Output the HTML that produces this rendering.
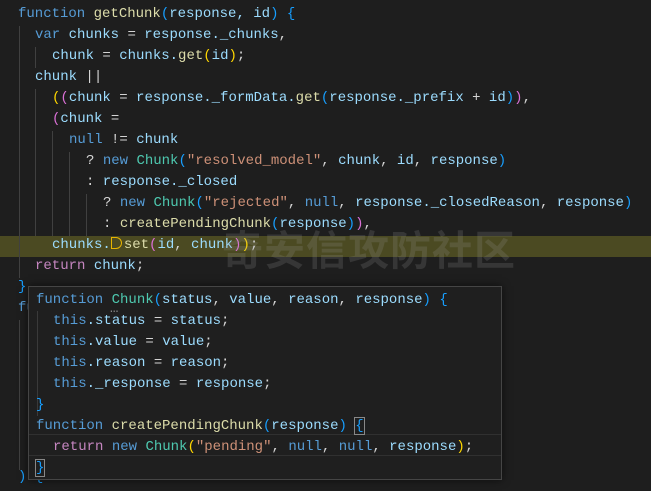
<!DOCTYPE html>
<html><head><meta charset="utf-8"><style>
html,body{margin:0;padding:0;}
body{width:651px;height:489px;background:#1e1e1e;overflow:hidden;position:relative;font-family:"Liberation Mono",monospace;font-size:14px;color:#9cdcfe;}
.l{position:absolute;height:21px;line-height:21px;white-space:pre;}
.k{color:#569cd6}.f{color:#dcdcaa}.c{color:#4ec9b0}.s{color:#ce9178}.p{color:#c586c0}.w{color:#d4d4d4}
.y{color:#ffd700}.m{color:#da70d6}.b{color:#179fff}
.g{position:absolute;width:1px;background:#404040;}
#hl{position:absolute;left:0;top:236px;width:651px;height:21px;background:#4b4a22;}
#wm{position:absolute;left:222px;top:223px;font-family:"Noto Sans CJK SC",sans-serif;font-weight:bold;font-size:41px;line-height:48px;color:rgba(150,150,150,0.2);letter-spacing:1px;white-space:nowrap;}
#pop{position:absolute;left:28px;top:286px;width:472px;height:192px;background:#1f1f1f;border:1px solid #454545;box-shadow:0 0 8px rgba(0,0,0,.6);}
#code{position:absolute;left:0;top:2px;width:651px;height:489px;}
</style></head><body>
<div id="hl"></div>
<div id="code">
<div class="g" style="left:19px;top:24px;height:252px"></div>
<div class="g" style="left:35px;top:45px;height:21px"></div>
<div class="g" style="left:35px;top:87px;height:147px"></div>
<div class="g" style="left:52px;top:129px;height:105px"></div>
<div class="g" style="left:69px;top:150px;height:84px"></div>
<div class="g" style="left:86px;top:192px;height:42px"></div>
<div class="g" style="left:19px;top:318px;height:150px"></div>

<div class="l" style="left:18px;top:2px"><span class="k">function</span> <span class="f">getChunk</span><span class="b">(</span>response, id<span class="b">)</span> <span class="b">{</span></div>
<div class="l" style="left:35px;top:23px"><span class="k">var</span> chunks <span class="w">=</span> response.<span>_chunks</span><span class="w">,</span></div>
<div class="l" style="left:52px;top:44px">chunk <span class="w">=</span> chunks.<span class="f">get</span><span class="y">(</span>id<span class="y">)</span><span class="w">;</span></div>
<div class="l" style="left:35px;top:65px">chunk <span class="w">||</span></div>
<div class="l" style="left:52px;top:86px"><span class="y">(</span><span class="m">(</span>chunk <span class="w">=</span> response._formData.<span class="f">get</span><span class="b">(</span>response._prefix <span class="w">+</span> id<span class="b">)</span><span class="m">)</span><span class="w">,</span></div>
<div class="l" style="left:52px;top:107px"><span class="m">(</span>chunk <span class="w">=</span></div>
<div class="l" style="left:69px;top:128px"><span class="k">null</span> <span class="w">!=</span> chunk</div>
<div class="l" style="left:86px;top:149px"><span class="w">?</span> <span class="k">new</span> <span class="c">Chunk</span><span class="b">(</span><span class="s">"resolved_model"</span><span class="w">,</span> chunk<span class="w">,</span> id<span class="w">,</span> response<span class="b">)</span></div>
<div class="l" style="left:86px;top:170px"><span class="w">:</span> response._closed</div>
<div class="l" style="left:103px;top:191px"><span class="w">?</span> <span class="k">new</span> <span class="c">Chunk</span><span class="b">(</span><span class="s">"rejected"</span><span class="w">,</span> <span class="k">null</span><span class="w">,</span> response._closedReason<span class="w">,</span> response<span class="b">)</span></div>
<div class="l" style="left:103px;top:212px"><span class="w">:</span> <span class="f">createPendingChunk</span><span class="b">(</span>response<span class="b">)</span><span class="m">)</span><span class="w">,</span></div>
<div class="l" style="left:52px;top:233px">chunks.<span style="display:inline-block;width:11px;height:12px;border:1.5px solid #e8b400;border-radius:0 6px 6px 0;box-sizing:border-box;vertical-align:-1px;margin-right:2px"></span><span class="f">set</span><span class="m">(</span>id<span class="w">,</span> chunk<span class="m">)</span><span class="y">)</span><span class="w">;</span></div>
<div class="l" style="left:35px;top:254px"><span class="p">return</span> chunk<span class="w">;</span></div>
<div class="l" style="left:18px;top:275px"><span class="b">}</span></div>
<div class="l" style="left:18px;top:296px"><span class="k">fu</span></div>
<div class="l" style="left:18px;top:465px"><span class="b">)</span> <span class="b">{</span></div>
</div>

<div id="wm">奇安信攻防社区</div>

<div id="pop">
<div class="g" style="left:8px;top:24px;height:105px;background:#3a3a3a"></div>
<div style="position:absolute;left:0;top:147px;width:472px;height:20px;border-top:1px solid #303030;border-bottom:1px solid #303030"></div>
<div class="l" style="left:7px;top:3px"><span class="k">function</span> <span class="c">Chunk</span><span class="b">(</span>status<span class="w">,</span> value<span class="w">,</span> reason<span class="w">,</span> response<span class="b">)</span> <span class="b">{</span></div>
<div class="l" style="left:81px;top:12px;color:#888">…</div>
<div class="l" style="left:24px;top:24px"><span class="k">this</span>.status <span class="w">=</span> status<span class="w">;</span></div>
<div class="l" style="left:24px;top:45px"><span class="k">this</span>.value <span class="w">=</span> value<span class="w">;</span></div>
<div class="l" style="left:24px;top:66px"><span class="k">this</span>.reason <span class="w">=</span> reason<span class="w">;</span></div>
<div class="l" style="left:24px;top:87px"><span class="k">this</span>._response <span class="w">=</span> response<span class="w">;</span></div>
<div class="l" style="left:7px;top:108px"><span class="b">}</span></div>
<div class="l" style="left:7px;top:129px"><span class="k">function</span> <span class="f">createPendingChunk</span><span class="b">(</span>response<span class="b">)</span> <span class="b" style="outline:1px solid #888">{</span></div>
<div class="l" style="left:24px;top:150px"><span class="p">return</span> <span class="k">new</span> <span class="c">Chunk</span><span class="y">(</span><span class="s">"pending"</span><span class="w">,</span> <span class="k">null</span><span class="w">,</span> <span class="k">null</span><span class="w">,</span> response<span class="y">)</span><span class="w">;</span></div>
<div class="l" style="left:7px;top:171px"><span class="b" style="outline:1px solid #888">}</span></div>
</div>
</body></html>
